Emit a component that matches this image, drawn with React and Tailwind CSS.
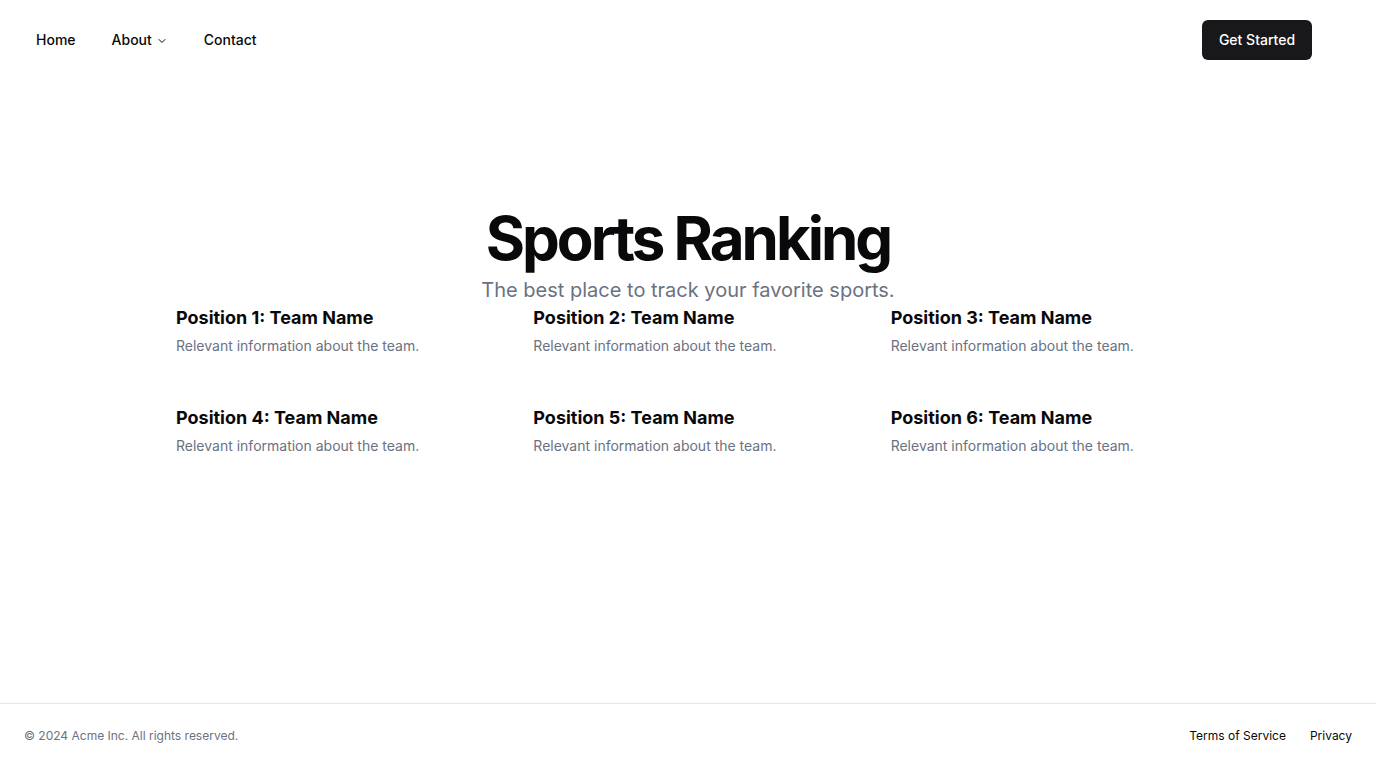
import React from 'react'
import { ChevronDown } from 'lucide-react'

const teams = [1, 2, 3, 4, 5, 6]

export default function App() {
  return (
    <div className="flex min-h-screen flex-col bg-white text-[#09090b]" style={{ fontFamily: 'Inter, "Noto Sans", sans-serif' }}>
      <header className="flex h-20 items-center px-6">
        <nav className="flex items-center gap-3">
          <a className="px-3 py-2 text-sm font-medium">Home</a>
          <a className="flex items-center gap-1 px-3 py-2 text-sm font-medium">
            About
            <ChevronDown className="h-3 w-3 mt-0.5" />
          </a>
          <a className="px-3 py-2 text-sm font-medium">Contact</a>
        </nav>
        <button className="ml-auto mr-10 h-10 w-[110px] rounded-md bg-[#18181b] text-sm font-medium text-white">
          Get Started
        </button>
      </header>

      <main className="flex-1 pt-32">
        <div className="flex flex-col items-center text-center">
          <h1 className="text-6xl leading-none font-bold tracking-tighter">Sports Ranking</h1>
          <p className="mt-2 text-xl text-gray-500">The best place to track your favorite sports.</p>
        </div>
        <div className="mx-auto grid max-w-5xl grid-cols-3 gap-x-12 gap-y-12">
          {teams.map((n) => (
            <div key={n} className="space-y-1">
              <h3 className="text-lg font-bold">Position {n}: Team Name</h3>
              <p className="text-sm text-gray-500">Relevant information about the team.</p>
            </div>
          ))}
        </div>
      </main>

      <footer className="flex items-center border-t border-gray-200 px-6 py-6">
        <p className="text-xs text-gray-500">© 2024 Acme Inc. All rights reserved.</p>
        <nav className="ml-auto flex gap-6">
          <a className="text-xs">Terms of Service</a>
          <a className="text-xs">Privacy</a>
        </nav>
      </footer>
    </div>
  )
}
